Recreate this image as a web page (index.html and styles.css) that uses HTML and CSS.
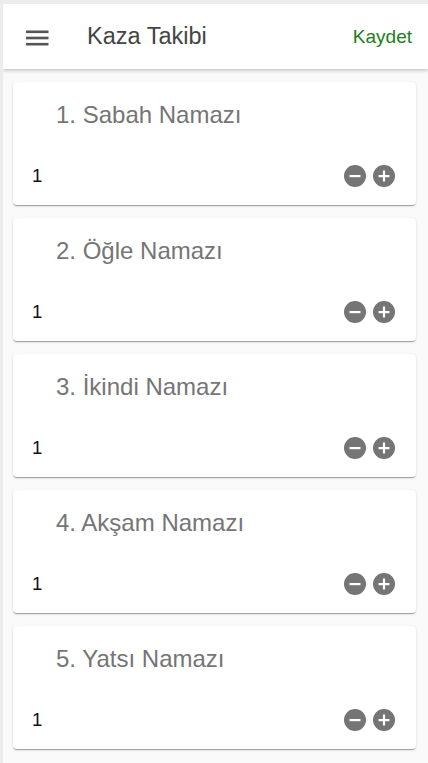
FILE: index.html
```html
<!DOCTYPE html>
<html lang="tr">
<head>
<meta charset="utf-8">
<title>Kaza Takibi</title>
<link rel="stylesheet" href="styles.css">
</head>
<body>
<div class="app">
  <header class="topbar">
    <svg class="menu" width="30" height="30" viewBox="0 0 30 30" aria-hidden="true">
      <rect x="4" y="8.5" width="22.5" height="2.6" fill="#555"/>
      <rect x="4" y="14.7" width="22.5" height="2.6" fill="#555"/>
      <rect x="4" y="20.9" width="22.5" height="2.6" fill="#555"/>
    </svg>
    <h1 class="title">Kaza Takibi</h1>
    <span class="save">Kaydet</span>
  </header>
  <main class="list">
    <section class="card">
      <h2 class="card-title">1. Sabah Namazı</h2>
      <div class="row">
        <span class="count">1</span>
        <div class="actions">
          <svg class="btn" width="22" height="22" viewBox="0 0 22 22"><circle cx="11" cy="11" r="11" fill="#757575"/><rect x="5.5" y="10" width="11" height="2.2" fill="#fff"/></svg>
          <svg class="btn" width="22" height="22" viewBox="0 0 22 22"><circle cx="11" cy="11" r="11" fill="#757575"/><rect x="5.5" y="10" width="11" height="2.2" fill="#fff"/><rect x="9.9" y="5.5" width="2.2" height="11" fill="#fff"/></svg>
        </div>
      </div>
    </section>
    <section class="card">
      <h2 class="card-title">2. Öğle Namazı</h2>
      <div class="row">
        <span class="count">1</span>
        <div class="actions">
          <svg class="btn" width="22" height="22" viewBox="0 0 22 22"><circle cx="11" cy="11" r="11" fill="#757575"/><rect x="5.5" y="10" width="11" height="2.2" fill="#fff"/></svg>
          <svg class="btn" width="22" height="22" viewBox="0 0 22 22"><circle cx="11" cy="11" r="11" fill="#757575"/><rect x="5.5" y="10" width="11" height="2.2" fill="#fff"/><rect x="9.9" y="5.5" width="2.2" height="11" fill="#fff"/></svg>
        </div>
      </div>
    </section>
    <section class="card">
      <h2 class="card-title">3. İkindi Namazı</h2>
      <div class="row">
        <span class="count">1</span>
        <div class="actions">
          <svg class="btn" width="22" height="22" viewBox="0 0 22 22"><circle cx="11" cy="11" r="11" fill="#757575"/><rect x="5.5" y="10" width="11" height="2.2" fill="#fff"/></svg>
          <svg class="btn" width="22" height="22" viewBox="0 0 22 22"><circle cx="11" cy="11" r="11" fill="#757575"/><rect x="5.5" y="10" width="11" height="2.2" fill="#fff"/><rect x="9.9" y="5.5" width="2.2" height="11" fill="#fff"/></svg>
        </div>
      </div>
    </section>
    <section class="card">
      <h2 class="card-title">4. Akşam Namazı</h2>
      <div class="row">
        <span class="count">1</span>
        <div class="actions">
          <svg class="btn" width="22" height="22" viewBox="0 0 22 22"><circle cx="11" cy="11" r="11" fill="#757575"/><rect x="5.5" y="10" width="11" height="2.2" fill="#fff"/></svg>
          <svg class="btn" width="22" height="22" viewBox="0 0 22 22"><circle cx="11" cy="11" r="11" fill="#757575"/><rect x="5.5" y="10" width="11" height="2.2" fill="#fff"/><rect x="9.9" y="5.5" width="2.2" height="11" fill="#fff"/></svg>
        </div>
      </div>
    </section>
    <section class="card">
      <h2 class="card-title">5. Yatsı Namazı</h2>
      <div class="row">
        <span class="count">1</span>
        <div class="actions">
          <svg class="btn" width="22" height="22" viewBox="0 0 22 22"><circle cx="11" cy="11" r="11" fill="#757575"/><rect x="5.5" y="10" width="11" height="2.2" fill="#fff"/></svg>
          <svg class="btn" width="22" height="22" viewBox="0 0 22 22"><circle cx="11" cy="11" r="11" fill="#757575"/><rect x="5.5" y="10" width="11" height="2.2" fill="#fff"/><rect x="9.9" y="5.5" width="2.2" height="11" fill="#fff"/></svg>
        </div>
      </div>
    </section>
  </main>
</div>
</body>
</html>
```

FILE: styles.css
```css
* { box-sizing: border-box; }

html, body {
  margin: 0;
  padding: 0;
  background: #ececec;
  font-family: "Liberation Sans", Arial, sans-serif;
}

.app {
  margin: 4px 0 0 3px;
  min-height: 759px;
  background: #fafafa;
  overflow: hidden;
}

.topbar {
  height: 65px;
  display: flex;
  align-items: center;
  padding: 0 16px 0 19px;
  background: #fff;
  box-shadow: 0 2px 4px rgba(0, 0, 0, 0.16), 0 1px 2px rgba(0, 0, 0, 0.08);
  position: relative;
}

.menu { display: block; flex: none; }

.title {
  margin: 0 0 0 35px;
  flex: 1;
  font-size: 23.5px;
  font-weight: normal;
  color: #444;
}

.save {
  font-size: 19px;
  color: #1b7d1b;
}

.list {
  display: flex;
  flex-direction: column;
  gap: 13px;
  padding: 13px 12px 13px 10px;
}

.card {
  background: #fff;
  border-radius: 4px;
  padding: 19px 21px 18px 19px;
  box-shadow: 0 2px 1px -1px rgba(0, 0, 0, 0.2), 0 1px 1px 0 rgba(0, 0, 0, 0.14), 0 1px 3px 0 rgba(0, 0, 0, 0.12);
}

.card-title {
  margin: 0 0 36px 24px;
  font-size: 24px;
  line-height: 28px;
  font-weight: normal;
  color: #757575;
}

.row {
  display: flex;
  align-items: center;
  justify-content: space-between;
  height: 22px;
}

.count {
  font-size: 18.5px;
  color: #111;
}

.actions {
  display: flex;
  gap: 7px;
}

.btn { display: block; }
```
